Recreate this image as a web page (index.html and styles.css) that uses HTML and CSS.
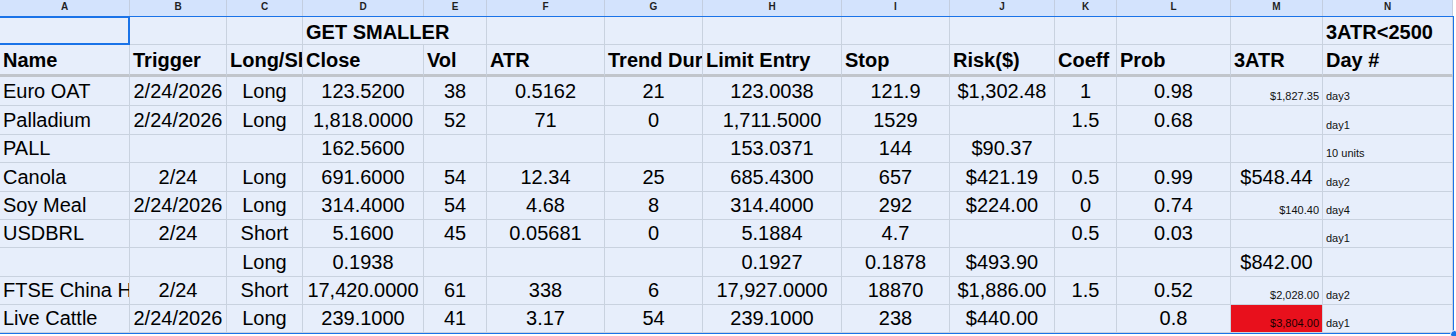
FILE: index.html
```html
<!DOCTYPE html>
<html lang="en">
<head>
    <meta charset="UTF-8">
    <title>Trades sheet</title>
    <link rel="stylesheet" href="styles.css">
</head>
<body>
    <div class="sheet">
        <div class="row heads">
            <div class="colhead">A</div><div class="colhead">B</div><div class="colhead">C</div><div class="colhead">D</div>
            <div class="colhead">E</div><div class="colhead">F</div><div class="colhead">G</div><div class="colhead">H</div>
            <div class="colhead">I</div><div class="colhead">J</div><div class="colhead">K</div><div class="colhead">L</div>
            <div class="colhead">M</div><div class="colhead">N</div>
        </div>

        <div class="row r1">
            <div class="cell"></div><div class="cell"></div><div class="cell"></div>
            <div class="cell b wide">GET SMALLER</div>
            <div class="cell"></div><div class="cell"></div><div class="cell"></div><div class="cell"></div>
            <div class="cell"></div><div class="cell"></div><div class="cell"></div><div class="cell"></div>
            <div class="cell b">3ATR&lt;2500</div>
        </div>

        <div class="row r2">
            <div class="cell b">Name</div><div class="cell b">Trigger</div><div class="cell b">Long/Short</div>
            <div class="cell b">Close</div><div class="cell b">Vol</div><div class="cell b">ATR</div>
            <div class="cell b">Trend Duration</div><div class="cell b">Limit Entry</div><div class="cell b">Stop</div>
            <div class="cell b">Risk($)</div><div class="cell b">Coeff</div><div class="cell b">Prob</div>
            <div class="cell b">3ATR</div><div class="cell b">Day #</div>
        </div>

        <div class="row h29">
            <div class="cell">Euro OAT</div><div class="cell c">2/24/2026</div><div class="cell c">Long</div>
            <div class="cell c">123.5200</div><div class="cell c">38</div><div class="cell c">0.5162</div>
            <div class="cell c">21</div><div class="cell c">123.0038</div><div class="cell c">121.9</div>
            <div class="cell c">$1,302.48</div><div class="cell c">1</div><div class="cell c">0.98</div>
            <div class="cell r s">$1,827.35</div><div class="cell s">day3</div>
        </div>

        <div class="row h29">
            <div class="cell">Palladium</div><div class="cell c">2/24/2026</div><div class="cell c">Long</div>
            <div class="cell c">1,818.0000</div><div class="cell c">52</div><div class="cell c">71</div>
            <div class="cell c">0</div><div class="cell c">1,711.5000</div><div class="cell c">1529</div>
            <div class="cell c"></div><div class="cell c">1.5</div><div class="cell c">0.68</div>
            <div class="cell"></div><div class="cell s">day1</div>
        </div>

        <div class="row h28">
            <div class="cell">PALL</div><div class="cell"></div><div class="cell"></div>
            <div class="cell c">162.5600</div><div class="cell"></div><div class="cell"></div>
            <div class="cell"></div><div class="cell c">153.0371</div><div class="cell c">144</div>
            <div class="cell c">$90.37</div><div class="cell"></div><div class="cell"></div>
            <div class="cell"></div><div class="cell s">10 units</div>
        </div>

        <div class="row h29">
            <div class="cell">Canola</div><div class="cell c">2/24</div><div class="cell c">Long</div>
            <div class="cell c">691.6000</div><div class="cell c">54</div><div class="cell c">12.34</div>
            <div class="cell c">25</div><div class="cell c">685.4300</div><div class="cell c">657</div>
            <div class="cell c">$421.19</div><div class="cell c">0.5</div><div class="cell c">0.99</div>
            <div class="cell c">$548.44</div><div class="cell s">day2</div>
        </div>

        <div class="row h28">
            <div class="cell">Soy Meal</div><div class="cell c">2/24/2026</div><div class="cell c">Long</div>
            <div class="cell c">314.4000</div><div class="cell c">54</div><div class="cell c">4.68</div>
            <div class="cell c">8</div><div class="cell c">314.4000</div><div class="cell c">292</div>
            <div class="cell c">$224.00</div><div class="cell c">0</div><div class="cell c">0.74</div>
            <div class="cell r s">$140.40</div><div class="cell s">day4</div>
        </div>

        <div class="row h28">
            <div class="cell">USDBRL</div><div class="cell c">2/24</div><div class="cell c">Short</div>
            <div class="cell c">5.1600</div><div class="cell c">45</div><div class="cell c">0.05681</div>
            <div class="cell c">0</div><div class="cell c">5.1884</div><div class="cell c">4.7</div>
            <div class="cell"></div><div class="cell c">0.5</div><div class="cell c">0.03</div>
            <div class="cell"></div><div class="cell s">day1</div>
        </div>

        <div class="row h29">
            <div class="cell"></div><div class="cell"></div><div class="cell c">Long</div>
            <div class="cell c">0.1938</div><div class="cell"></div><div class="cell"></div>
            <div class="cell"></div><div class="cell c">0.1927</div><div class="cell c">0.1878</div>
            <div class="cell c">$493.90</div><div class="cell"></div><div class="cell"></div>
            <div class="cell c">$842.00</div><div class="cell"></div>
        </div>

        <div class="row h28">
            <div class="cell">FTSE China H50</div><div class="cell c">2/24</div><div class="cell c">Short</div>
            <div class="cell c">17,420.0000</div><div class="cell c">61</div><div class="cell c">338</div>
            <div class="cell c">6</div><div class="cell c">17,927.0000</div><div class="cell c">18870</div>
            <div class="cell c">$1,886.00</div><div class="cell c">1.5</div><div class="cell c">0.52</div>
            <div class="cell r s">$2,028.00</div><div class="cell s">day2</div>
        </div>

        <div class="row h28">
            <div class="cell">Live Cattle</div><div class="cell c">2/24/2026</div><div class="cell c">Long</div>
            <div class="cell c">239.1000</div><div class="cell c">41</div><div class="cell c">3.17</div>
            <div class="cell c">54</div><div class="cell c">239.1000</div><div class="cell c">238</div>
            <div class="cell c">$440.00</div><div class="cell"></div><div class="cell c">0.8</div>
            <div class="cell r s alert">$3,804.00</div><div class="cell s">day1</div>
        </div>

        <div class="selection"></div>
        <div class="active-cell"></div>
        <div class="handle"></div>
    </div>
</body>
</html>
```

FILE: styles.css
```css
body {
    margin: 0;
    background: #fff;
    font-family: "Liberation Sans", Arial, sans-serif;
    color: #000;
}
.sheet {
    position: relative;
    width: 1456px;
    height: 336px;
    overflow: hidden;
}
.row {
    display: grid;
    grid-template-columns: 130px 97px 76px 121px 63px 118px 98px 139px 108px 105px 62px 114px 92px 130px;
}
.heads {
    height: 17px;
}
.colhead {
    box-sizing: border-box;
    height: 17px;
    background: #d3e3fd;
    border-right: 1px solid #c3cee0;
    border-bottom: 1px solid #1a73e8;
    font-size: 10px;
    font-weight: bold;
    line-height: 14px;
    text-align: center;
    color: #1f1f1f;
}
.r1 { height: 28px; }
.r2 { height: 32px; }
.h28 { height: 28px; }
.h29 { height: 29px; }
.cell {
    box-sizing: border-box;
    display: flex;
    align-items: flex-end;
    padding: 0 3px 2px;
    background: #e7eefb;
    border-right: 1px solid #c9d2df;
    border-bottom: 1px solid #c9d2df;
    font-size: 20px;
    line-height: 23px;
    white-space: nowrap;
    overflow: hidden;
}
.r1 .cell {
    padding-bottom: 0;
}
.r2 .cell {
    border-bottom: 3px solid #c1c5cb;
    padding-bottom: 2px;
}
.wide {
    grid-column: span 2;
}
.b { font-weight: bold; }
.c { justify-content: center; }
.r { justify-content: flex-end; }
.s {
    font-size: 11px;
    line-height: 13px;
    padding-bottom: 2px;
    color: #111;
}
.alert {
    background: #e8101c;
    color: #1a0000;
}
.selection {
    position: absolute;
    left: -1px;
    top: 16px;
    width: 1455px;
    height: 318px;
    box-sizing: border-box;
    border: 1px solid #1a73e8;
    pointer-events: none;
}
.active-cell {
    position: absolute;
    left: -2px;
    top: 16px;
    width: 132px;
    height: 29px;
    box-sizing: border-box;
    border: 2px solid #1a73e8;
}
.handle {
    position: absolute;
    left: 1450px;
    top: 330px;
    width: 7px;
    height: 7px;
    border-radius: 50%;
    background: #1a73e8;
    border: 1px solid #fff;
}
```
